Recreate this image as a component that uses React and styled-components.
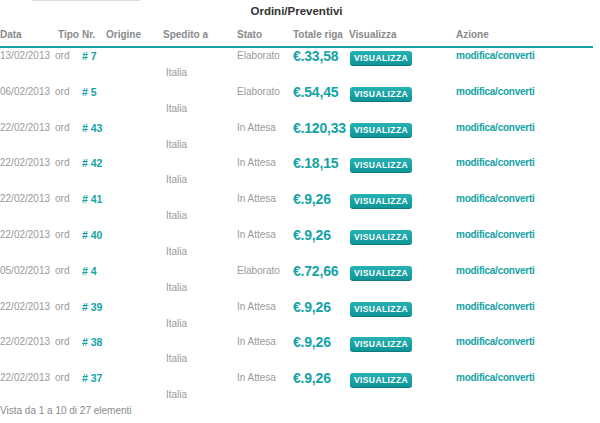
import React from 'react';
import styled, { createGlobalStyle } from 'styled-components';

const GlobalStyle = createGlobalStyle`
    body {
        margin: 0;
        background: #fff;
        font-family: "Liberation Sans", Arial, sans-serif;
    }
`

const teal = '#14a3a6';
const cols = '58px 24px 24px 57px 74px 56px 56px 107px 1fr';

const Page = styled.div`
    width: 600px;
`
const TopRule = styled.div`
    width: 108px;
    height: 1px;
    margin-left: 32px;
    background: #dcdcdc;
`
const Title = styled.h2`
    width: 593px;
    margin: 3px 0 0;
    font-size: 11.5px;
    line-height: 14px;
    font-weight: bold;
    color: #333;
    text-align: center;
`
const HeaderRow = styled.div`
    display: grid;
    grid-template-columns: ${cols};
    width: 593px;
    padding: 10px 0 4px;
    border-bottom: 2px solid ${teal};
    font-size: 10px;
    line-height: 14px;
    font-weight: bold;
    color: #8a8a8a;
`
const Row = styled.div`
    display: grid;
    grid-template-columns: ${cols};
    grid-template-rows: 14px 20.8px;
    width: 593px;
    padding-top: 1px;
    font-size: 10px;
    line-height: 14px;
    color: #9a9a9a;
`
const Cell = styled.div`
    white-space: nowrap;
    grid-row: 1;
`
const Number = styled(Cell)`
    color: ${teal};
    font-weight: bold;
    font-size: 10.5px;
`
const Country = styled.div`
    grid-row: 2;
    grid-column: 5;
    margin: 3px 0 0 3px;
`
const Amount = styled(Cell)`
    color: ${teal};
    font-size: 14px;
    font-weight: bold;
    letter-spacing: -0.2px;
`
const ViewButton = styled.button`
    grid-row: 1 / span 2;
    align-self: start;
    width: 62px;
    height: 15px;
    margin: 2px 0 0 1px;
    padding: 0;
    border: none;
    border-bottom: 1px solid #0b7b7e;
    border-radius: 3px;
    background: linear-gradient(to bottom, #26b2b4, #0f9598);
    color: #fff;
    font-family: "Liberation Sans", Arial, sans-serif;
    font-size: 8.5px;
    font-weight: bold;
    letter-spacing: 0.4px;
    line-height: 14px;
`
const Action = styled(Cell)`
    color: ${teal};
    font-weight: bold;
    font-size: 10px;
    letter-spacing: -0.25px;
`
const Footer = styled.div`
    margin-top: -2px;
    font-size: 10px;
    line-height: 14px;
    color: #8a8a8a;
`

const orders = [
    ['13/02/2013', '7', 'Elaborato', '€.33,58'],
    ['06/02/2013', '5', 'Elaborato', '€.54,45'],
    ['22/02/2013', '43', 'In Attesa', '€.120,33'],
    ['22/02/2013', '42', 'In Attesa', '€.18,15'],
    ['22/02/2013', '41', 'In Attesa', '€.9,26'],
    ['22/02/2013', '40', 'In Attesa', '€.9,26'],
    ['05/02/2013', '4', 'Elaborato', '€.72,66'],
    ['22/02/2013', '39', 'In Attesa', '€.9,26'],
    ['22/02/2013', '38', 'In Attesa', '€.9,26'],
    ['22/02/2013', '37', 'In Attesa', '€.9,26'],
];

function App() {
    return (
        <Page>
            <GlobalStyle />
            <TopRule />
            <Title>Ordini/Preventivi</Title>
            <HeaderRow>
                <div>Data</div>
                <div>Tipo</div>
                <div>Nr.</div>
                <div>Origine</div>
                <div>Spedito a</div>
                <div>Stato</div>
                <div>Totale riga</div>
                <div>Visualizza</div>
                <div>Azione</div>
            </HeaderRow>
            {orders.map(([date, nr, state, total], i) => (
                <Row key={i}>
                    <Cell>{date}</Cell>
                    <Cell style={{ marginLeft: -3 }}>ord</Cell>
                    <Number># {nr}</Number>
                    <Cell />
                    <Cell />
                    <Cell>{state}</Cell>
                    <Amount>{total}</Amount>
                    <ViewButton>VISUALIZZA</ViewButton>
                    <Action>modifica/converti</Action>
                    <Country>Italia</Country>
                </Row>
            ))}
            <Footer>Vista da 1 a 10 di 27 elementi</Footer>
        </Page>
    )
}

export default App;
